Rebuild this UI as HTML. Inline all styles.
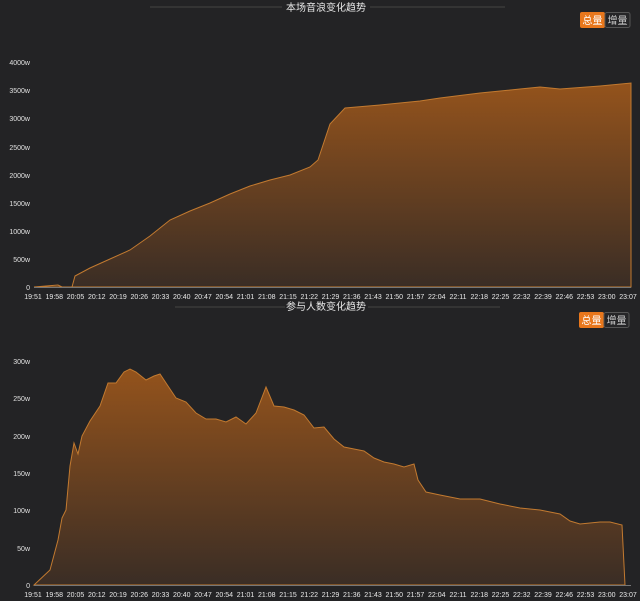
<!DOCTYPE html>
<html><head><meta charset="utf-8"><style>
html,body{margin:0;padding:0;background:#232325;width:640px;height:601px;overflow:hidden}
svg text{font-family:"Liberation Sans","Noto Sans CJK SC",sans-serif}
</style></head><body>
<svg width="640" height="601" viewBox="0 0 640 601">
<defs>
<linearGradient id="g1" x1="0" y1="0" x2="0" y2="1"><stop offset="0" stop-color="#94531c"/><stop offset="1" stop-color="#3a2d25"/></linearGradient>
<linearGradient id="g2" x1="0" y1="0" x2="0" y2="1"><stop offset="0" stop-color="#94531c"/><stop offset="1" stop-color="#3a2d25"/></linearGradient>
</defs>
<rect width="640" height="601" fill="#232325"/>
<line x1="150" y1="7" x2="282" y2="7" stroke="#444" />
<line x1="370" y1="7" x2="505" y2="7" stroke="#444" />
<text x="326" y="11" fill="#e8e8e8" font-size="10" text-anchor="middle">本场音浪变化趋势</text>
<rect x="580" y="12" width="25" height="16" rx="2" fill="#e8771c"/>
<rect x="605" y="12.5" width="25" height="15" rx="2" fill="#262628" stroke="#555"/>
<text x="592.5" y="24" fill="#fff" font-size="10" text-anchor="middle">总量</text>
<text x="617.5" y="24" fill="#ccc" font-size="10" text-anchor="middle">增量</text>
<g fill="#e0e0e0" font-size="7" text-anchor="end">
<text x="30" y="65">4000w</text><text x="30" y="93">3500w</text><text x="30" y="121">3000w</text><text x="30" y="150">2500w</text><text x="30" y="178">2000w</text><text x="30" y="206">1500w</text><text x="30" y="234">1000w</text><text x="30" y="262">500w</text><text x="30" y="290">0</text>
</g>
<path d="M34,287 L58,285 L62,287 L72,287 L75,276 L90,268 L110,259 L130,250 L150,236 L170,220 L190,211 L210,203 L230,194 L250,186 L270,180 L290,175 L310,167 L318,160 L330,124 L345,108 L380,105 L420,101 L440,98 L480,93 L520,89 L540,87 L560,89 L600,86 L631,83 L631,287 Z" fill="url(#g1)" stroke="#c27a30" stroke-width="1"/>
<line x1="34" y1="287.5" x2="631" y2="287.5" stroke="#777"/>
<g fill="#e8e8e8" font-size="7" text-anchor="middle">
<text x="33" y="299">19:51</text><text x="54.3" y="299">19:58</text><text x="75.5" y="299">20:05</text><text x="96.8" y="299">20:12</text><text x="118" y="299">20:19</text><text x="139.3" y="299">20:26</text><text x="160.5" y="299">20:33</text><text x="181.8" y="299">20:40</text><text x="203" y="299">20:47</text><text x="224.3" y="299">20:54</text><text x="245.5" y="299">21:01</text><text x="266.8" y="299">21:08</text><text x="288" y="299">21:15</text><text x="309.3" y="299">21:22</text><text x="330.5" y="299">21:29</text><text x="351.8" y="299">21:36</text><text x="373" y="299">21:43</text><text x="394.3" y="299">21:50</text><text x="415.5" y="299">21:57</text><text x="436.8" y="299">22:04</text><text x="458" y="299">22:11</text><text x="479.3" y="299">22:18</text><text x="500.5" y="299">22:25</text><text x="521.8" y="299">22:32</text><text x="543" y="299">22:39</text><text x="564.3" y="299">22:46</text><text x="585.5" y="299">22:53</text><text x="606.8" y="299">23:00</text><text x="628" y="299">23:07</text>
</g>
<line x1="175" y1="307" x2="285" y2="307" stroke="#444" />
<line x1="368" y1="307" x2="500" y2="307" stroke="#444" />
<text x="326" y="310" fill="#e8e8e8" font-size="10" text-anchor="middle">参与人数变化趋势</text>
<rect x="579" y="312" width="25" height="16" rx="2" fill="#e8771c"/>
<rect x="604" y="312.5" width="25" height="15" rx="2" fill="#262628" stroke="#555"/>
<text x="591.5" y="324" fill="#fff" font-size="10" text-anchor="middle">总量</text>
<text x="616.5" y="324" fill="#ccc" font-size="10" text-anchor="middle">增量</text>
<g fill="#e0e0e0" font-size="7" text-anchor="end">
<text x="30" y="364">300w</text><text x="30" y="401">250w</text><text x="30" y="439">200w</text><text x="30" y="476">150w</text><text x="30" y="513">100w</text><text x="30" y="551">50w</text><text x="30" y="588">0</text>
</g>
<path d="M34,585 L50,570 L58,540 L62,518 L66,510 L70,466 L74,443 L78,454 L82,436 L90,421 L100,406 L108,383 L116,383 L124,372 L130,369 L136,372 L146,380 L154,376 L160,374 L166,383 L176,398 L186,402 L196,413 L206,419 L216,419 L226,422 L236,417 L246,424 L256,413 L266,387 L274,406 L284,407 L294,410 L304,415 L314,428 L324,427 L334,439 L344,447 L354,449 L364,451 L374,458 L384,462 L394,464 L404,467 L414,464 L418,480 L426,492 L440,495 L460,499 L480,499 L500,504 L520,508 L540,510 L560,514 L570,521 L580,524 L600,522 L610,522 L622,525 L625,585 Z" fill="url(#g2)" stroke="#c27a30" stroke-width="1"/>
<line x1="34" y1="585.5" x2="631" y2="585.5" stroke="#777"/>
<g fill="#e8e8e8" font-size="7" text-anchor="middle">
<text x="33" y="597">19:51</text><text x="54.3" y="597">19:58</text><text x="75.5" y="597">20:05</text><text x="96.8" y="597">20:12</text><text x="118" y="597">20:19</text><text x="139.3" y="597">20:26</text><text x="160.5" y="597">20:33</text><text x="181.8" y="597">20:40</text><text x="203" y="597">20:47</text><text x="224.3" y="597">20:54</text><text x="245.5" y="597">21:01</text><text x="266.8" y="597">21:08</text><text x="288" y="597">21:15</text><text x="309.3" y="597">21:22</text><text x="330.5" y="597">21:29</text><text x="351.8" y="597">21:36</text><text x="373" y="597">21:43</text><text x="394.3" y="597">21:50</text><text x="415.5" y="597">21:57</text><text x="436.8" y="597">22:04</text><text x="458" y="597">22:11</text><text x="479.3" y="597">22:18</text><text x="500.5" y="597">22:25</text><text x="521.8" y="597">22:32</text><text x="543" y="597">22:39</text><text x="564.3" y="597">22:46</text><text x="585.5" y="597">22:53</text><text x="606.8" y="597">23:00</text><text x="628" y="597">23:07</text>
</g>
</svg>
</body></html>
